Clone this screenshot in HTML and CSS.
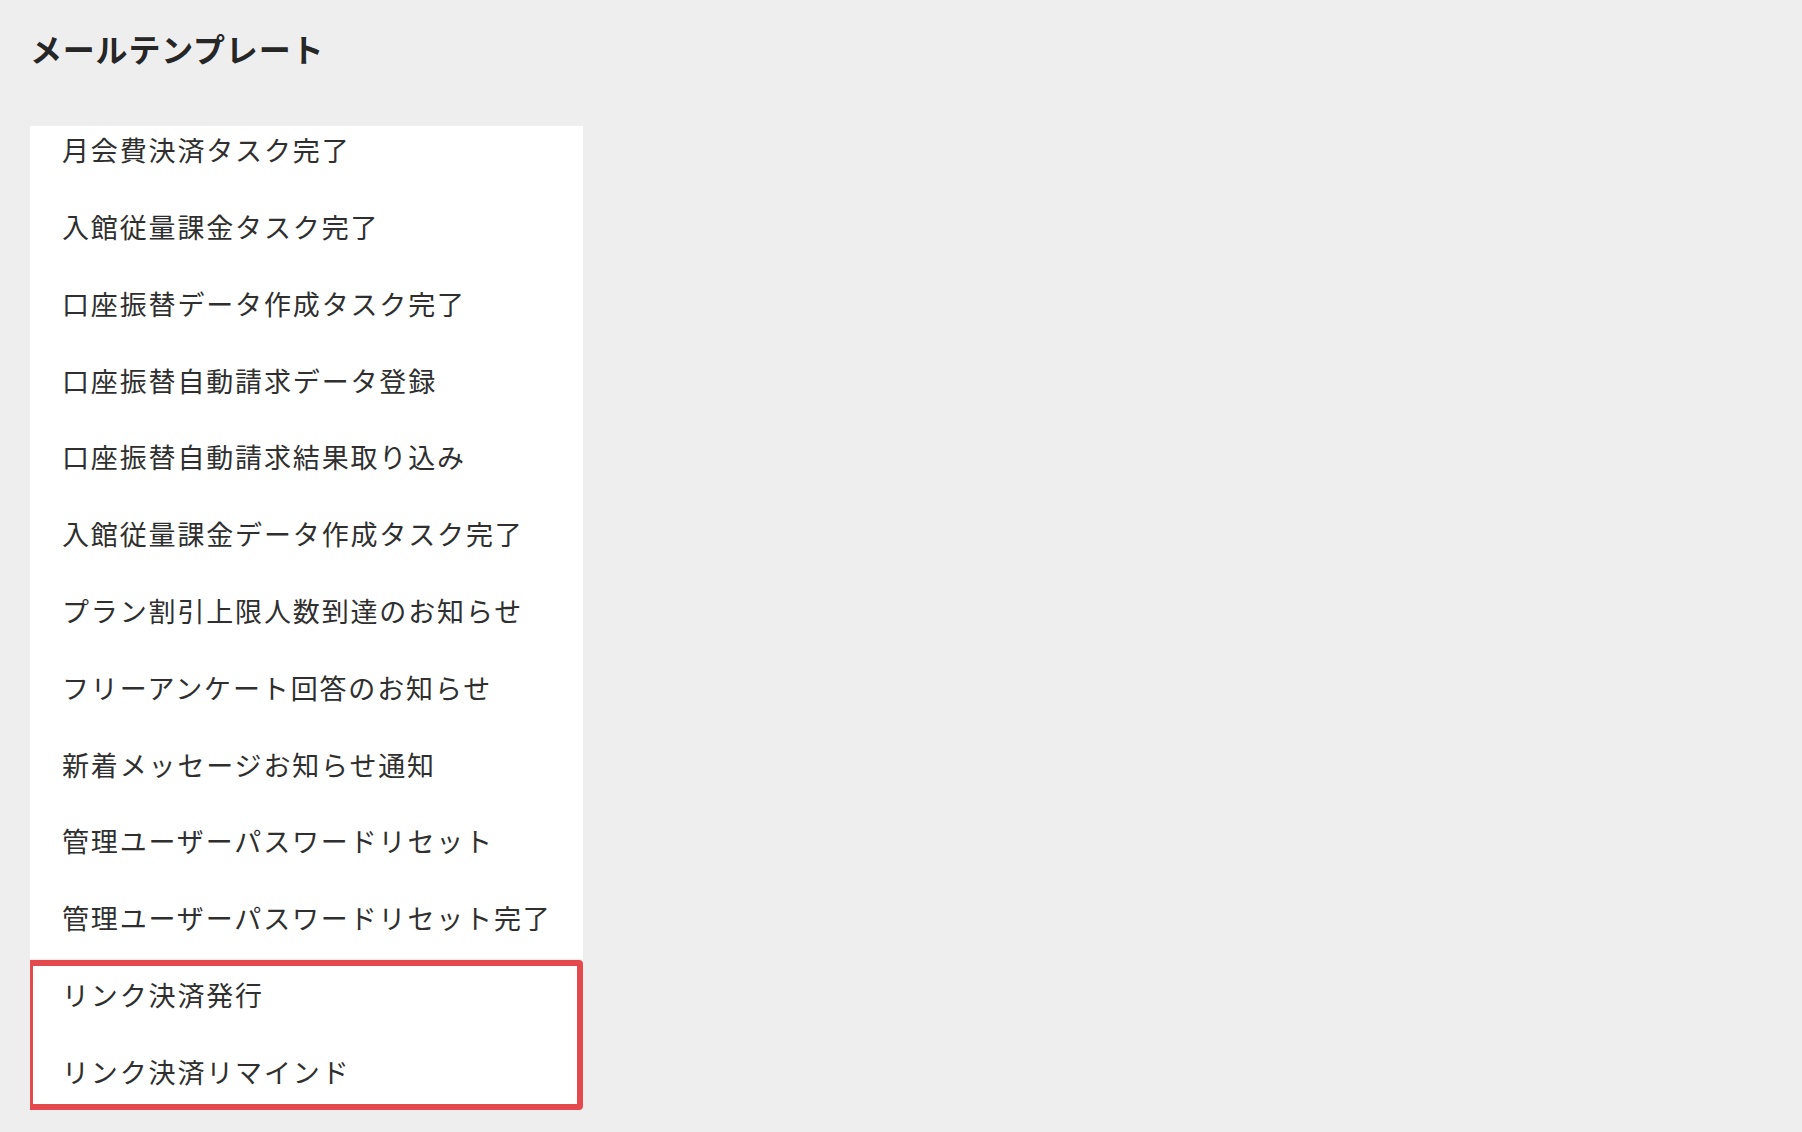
FILE: index.html
```html
<!DOCTYPE html>
<html lang="ja">
<head>
<meta charset="utf-8">
<title>メールテンプレート</title>
<link rel="stylesheet" href="styles.css">
</head>
<body>
<div class="page">
  <h1 class="title">メールテンプレート</h1>
  <div class="card">
    <ul class="list">
      <li class="row">月会費決済タスク完了</li>
      <li class="row">入館従量課金タスク完了</li>
      <li class="row">口座振替データ作成タスク完了</li>
      <li class="row">口座振替自動請求データ登録</li>
      <li class="row">口座振替自動請求結果取り込み</li>
      <li class="row">入館従量課金データ作成タスク完了</li>
      <li class="row">プラン割引上限人数到達のお知らせ</li>
      <li class="row">フリーアンケート回答のお知らせ</li>
      <li class="row">新着メッセージお知らせ通知</li>
      <li class="row">管理ユーザーパスワードリセット</li>
      <li class="row">管理ユーザーパスワードリセット完了</li>
      <li class="group">
        <ul class="sublist">
          <li class="row">リンク決済発行</li>
          <li class="row">リンク決済リマインド</li>
        </ul>
      </li>
    </ul>
  </div>
</div>
</body>
</html>
```

FILE: styles.css
```css
html, body {
  margin: 0;
  padding: 0;
}
body {
  background: #eeeeee;
  color: #2f2f2f;
  font-family: "Noto Sans CJK JP", "Noto Sans", sans-serif;
}
.page {
  padding: 25px 0 0 30px;
}
.title {
  margin: 0;
  font-size: 32px;
  line-height: 46px;
  font-weight: 700;
  letter-spacing: 0.8px;
  color: #262626;
}
.card {
  margin-top: 55px;
  width: 553px;
  background: #ffffff;
  overflow: hidden;
}
.list, .sublist {
  list-style: none;
  margin: 0;
  padding: 0;
}
.list {
  margin-top: -14.6px;
}
.row {
  height: 76.8px;
  display: flex;
  align-items: center;
  padding-left: 32px;
  font-size: 27px;
  letter-spacing: 1.85px;
  white-space: nowrap;
}
.group {
  position: relative;
}
.group::after {
  content: "";
  position: absolute;
  top: 3.8px;
  bottom: 0;
  left: -3px;
  right: 0;
  border: 6.5px solid #e4494e;
  border-radius: 4px;
  box-shadow: 0 0 3px rgba(0, 0, 0, 0.18);
  pointer-events: none;
}
```
